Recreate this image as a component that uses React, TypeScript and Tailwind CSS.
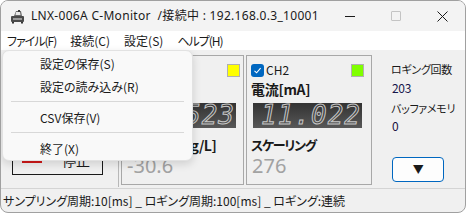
import React from "react";

function AppIcon() {
  return (
    <svg width="15" height="15" viewBox="0 0 15 15">
      <rect x="1" y="7" width="13" height="6" rx="1" fill="#4a4a4a" />
      <rect x="3" y="9" width="9" height="2" fill="#9a9a9a" />
      <path d="M4 7 L6 2 L11 2 L12 7 Z" fill="#6a6a6a" />
      <path d="M6 3 L10 3 L10.5 6 L5.5 6 Z" fill="#e8e8e8" />
      <rect x="8" y="1" width="2" height="2" fill="#3a3a3a" />
      <rect x="2" y="13" width="2" height="1.5" fill="#333" />
      <rect x="11" y="13" width="2" height="1.5" fill="#333" />
    </svg>
  );
}

function Check() {
  return (
    <div className="w-[13px] h-[13px] rounded-[3px] bg-[#0067c0] flex items-center justify-center">
      <svg width="9" height="9" viewBox="0 0 9 9">
        <path d="M1.5 4.8 L3.6 6.8 L7.6 2.2" fill="none" stroke="#fff" strokeWidth="1.1" />
      </svg>
    </div>
  );
}

function Seg({ value }: { value: string }) {
  return (
    <div className="w-[109px] h-[25px] bg-linear-to-b from-[#333333] to-[#585858] flex items-center justify-end pr-[1px] overflow-hidden">
      <span className="font-['DejaVu_Sans_Mono',monospace] italic text-[26px] leading-[25px] tracking-[1px] text-transparent [-webkit-text-stroke:1px_#c6c6c6]">
        {value}
      </span>
    </div>
  );
}

export default function App() {
  return (
    <div className="w-[466px] h-[213px] bg-white">
      <div className="relative w-[466px] h-[213px] overflow-hidden rounded-[8px] border border-[#a0a0a0] bg-[#f0f0f0] flex flex-col text-[#1a1a1a] font-['Noto_Sans_CJK_JP',sans-serif] [font-feature-settings:'palt']">
        {/* Title bar */}
        <div className="h-[30px] shrink-0 flex items-center bg-[#f3f3f3]">
          <div className="ml-[9px] w-[15px] h-[15px]">
            <AppIcon />
          </div>
          <span className="ml-[6px] text-[12px] tracking-[0.3px] whitespace-pre font-['Noto_Sans','Noto_Sans_CJK_JP',sans-serif] [font-feature-settings:normal]">
            LNX-006A C-Monitor  /接続中 : 192.168.0.3_10001
          </span>
          <div className="ml-auto flex h-full">
            <div className="w-[46px] h-full flex items-center justify-center">
              <div className="w-[10px] h-[1px] bg-[#1a1a1a]" />
            </div>
            <div className="w-[46px] h-full flex items-center justify-center">
              <div className="w-[10px] h-[10px] border border-[#c4c4c4] rounded-[1px]" />
            </div>
            <div className="w-[46px] h-full flex items-center justify-center">
              <svg width="11" height="11" viewBox="0 0 11 11">
                <path d="M0.5 0.5 L10.5 10.5 M10.5 0.5 L0.5 10.5" stroke="#1a1a1a" strokeWidth="1" />
              </svg>
            </div>
          </div>
        </div>

        {/* Menu bar */}
        <div className="h-[19px] shrink-0 bg-white flex items-center text-[12px]">
          <span className="px-[6px] tracking-[-1px]">ファイル(F)</span>
          <span className="px-[7px] ml-[1px]">接続(C)</span>
          <span className="px-[7px]">設定(S)</span>
          <span className="px-[7px] tracking-[-1px]">ヘルプ(H)</span>
        </div>

        {/* Content */}
        <div className="h-[138px] min-h-0 shrink-0 flex pt-[5px] overflow-hidden">
          {/* left column */}
          <div className="w-[118px] h-[132px] shrink-0 border-r border-[#b8b8b8] flex flex-col items-start pl-[11px]">
            <div className="mt-[20px] w-[91px] h-[36px] border border-[#1a1a1a] bg-[#f0f0f0] flex items-center justify-center text-[14px]">
              開始
            </div>
            <div className="mt-[28px] w-[91px] h-[36px] border border-[#1a1a1a] bg-[#f0f0f0] flex items-center">
              <div className="ml-[9px] w-[20px] h-[2px] bg-[#d01818] mt-[10px]" />
              <span className="ml-[20px] mt-[5px] text-[14px] leading-[16px]">停止</span>
            </div>
          </div>

          {/* CH1 */}
          <div className="ml-[2px] w-[123px] h-[130px] shrink-0 border border-[#a8a8a8] flex flex-col pl-[4px]">
            <div className="mt-[7px] h-[14px] flex items-center">
              <Check />
              <span className="ml-[2px] text-[12px]">CH1</span>
              <div className="ml-auto mr-[3px] w-[13px] h-[13px] border border-[#b0b0b0] bg-[#ffff00] mt-[1px]" />
            </div>
            <div className="mt-[4px] h-[16px] leading-[16px] text-[14px] font-bold">電圧[V]</div>
            <div className="mt-[6px] ml-[1px]">
              <Seg value="12.523" />
            </div>
            <div className="mt-[9px] h-[16px] leading-[16px] text-[14px] font-bold tracking-[-0.5px]">DO濃度[mg/L]</div>
            <div className="mt-[2px] ml-[1px] h-[22px] leading-[22px] text-[20px] text-[#a2a2a2] font-['Noto_Sans',sans-serif]">
              -30.6
            </div>
          </div>

          {/* CH2 */}
          <div className="ml-[2px] w-[126px] h-[130px] shrink-0 border border-[#a8a8a8] flex flex-col pl-[4px]">
            <div className="mt-[7px] h-[14px] flex items-center">
              <Check />
              <span className="ml-[2px] text-[12px]">CH2</span>
              <div className="ml-auto mr-[7px] w-[13px] h-[13px] border border-[#b0b0b0] bg-[#80ff00] mt-[1px]" />
            </div>
            <div className="mt-[4px] h-[16px] leading-[16px] text-[14px] font-bold tracking-[-0.3px]">電流[mA]</div>
            <div className="mt-[6px] ml-[2px]">
              <Seg value="11.022" />
            </div>
            <div className="mt-[9px] h-[16px] leading-[16px] text-[13px] font-bold tracking-[-1.3px] whitespace-nowrap">スケーリング</div>
            <div className="mt-[2px] ml-[1px] h-[22px] leading-[22px] text-[20px] text-[#a2a2a2] font-['Noto_Sans',sans-serif]">
              276
            </div>
          </div>

          {/* right */}
          <div className="flex-1 flex flex-col pl-[19px] pt-[7px] text-[11px] tracking-[-0.3px] whitespace-nowrap">
            <div className="leading-[14px]">ロギング回数</div>
            <div className="mt-[5px] leading-[14px] text-[12px] text-[#16164a] pl-[1px]">203</div>
            <div className="mt-[6px] leading-[14px]">バッファメモリ</div>
            <div className="mt-[4px] leading-[14px] text-[12px] text-[#1a1040] pl-[1px]">0</div>
            <div className="mt-[24px] ml-[1px] w-[52px] h-[25px] rounded-[4px] border border-[#0067c0] bg-[#fdfdfd] flex items-center justify-center text-[11px]">
              ▼
            </div>
          </div>
        </div>

        {/* Status bar */}
        <div className="h-[24px] shrink-0 border-t border-[#d4d4d4] flex items-center pl-[2px] text-[12px] whitespace-pre">
          サンプリング周期:10[ms] _ ロギング周期:100[ms] _ ロギング:連続
        </div>

        {/* Dropdown menu */}
        <div className="absolute left-[1px] top-[49px] w-[191px] rounded-[7px] border border-[#e2e2e2] bg-[#f9f9f9] shadow-[0_3px_8px_rgba(0,0,0,0.14)] pt-[1px] text-[12px]">
          <div className="h-[23px] flex items-center pl-[37px]">設定の保存(S)</div>
          <div className="h-[23px] flex items-center pl-[37px]">設定の読み込み(R)</div>
          <div className="mt-[3px] mb-[4px] mx-[8px] h-[1px] bg-[#d8d8d8]" />
          <div className="h-[23px] flex items-center pl-[37px]">CSV保存(V)</div>
          <div className="mt-[3px] mb-[4px] mx-[8px] h-[1px] bg-[#d8d8d8]" />
          <div className="h-[23px] flex items-center pl-[37px]">終了(X)</div>
        </div>
      </div>
    </div>
  );
}
